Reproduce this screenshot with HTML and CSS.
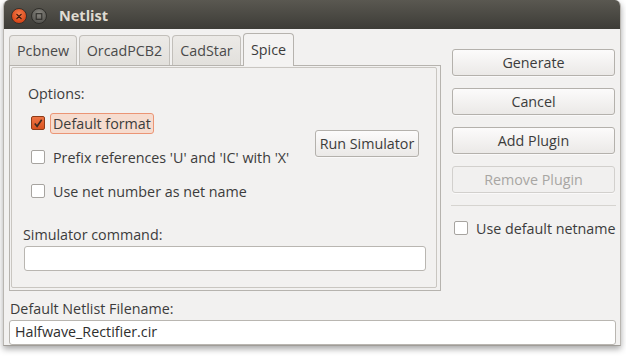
FILE: index.html
```html
<!DOCTYPE html>
<html>
<head>
<meta charset="utf-8">
<link rel="stylesheet" href="styles.css">
</head>
<body>
<div class="window">
  <div class="titlebar">
    <span class="wbtn close"><svg width="15" height="15" viewBox="0 0 15 15"><path d="M5.2 5.2 L9.8 9.8 M9.8 5.2 L5.2 9.8" stroke="#3a1a0e" stroke-width="1.4" stroke-linecap="round"/></svg></span>
    <span class="wbtn max"><svg width="15" height="15" viewBox="0 0 15 15"><rect x="4.5" y="4.5" width="6" height="6" fill="none" stroke="#2e2d2a" stroke-width="1.2"/></svg></span>
    <span class="title">Netlist</span>
  </div>
  <div class="body">
    <div class="main">
      <div class="left">
        <div class="tabs">
          <div class="tab t1">Pcbnew</div>
          <div class="tab t2">OrcadPCB2</div>
          <div class="tab t3">CadStar</div>
          <div class="tab active">Spice</div>
        </div>
        <div class="page">
          <div class="box">
            <div class="options-label">Options:</div>
            <div class="opts">
              <div class="checks">
                <label class="check first"><span class="cb checked"><svg width="13" height="13" viewBox="0 0 13 13"><path d="M3 6.5 L5.5 9.5 L10.5 2.5" fill="none" stroke="#3b2a22" stroke-width="1.8"/></svg></span><span class="focus">Default format</span></label>
                <label class="check"><span class="cb"></span><span class="lbl">Prefix references 'U' and 'IC' with 'X'</span></label>
                <label class="check"><span class="cb"></span><span class="lbl">Use net number as net name</span></label>
              </div>
              <div class="runcol"><button class="btn run">Run Simulator</button></div>
            </div>
            <div class="sim-label">Simulator command:</div>
            <div class="input sim"></div>
          </div>
        </div>
      </div>
      <div class="right">
        <button class="btn side">Generate</button>
        <button class="btn side">Cancel</button>
        <button class="btn side">Add Plugin</button>
        <button class="btn side disabled">Remove Plugin</button>
        <div class="sep"></div>
        <label class="check netname"><span class="cb"></span><span class="lbl">Use default netname</span></label>
      </div>
    </div>
    <div class="fn-label">Default Netlist Filename:</div>
    <div class="input fn">Halfwave_Rectifier.cir</div>
  </div>
</div>
</body>
</html>
```
FILE: styles.css
```css
* { box-sizing: border-box; }
html, body { margin: 0; padding: 0; }
body {
  width: 626px; height: 356px; overflow: hidden;
  background: #ffffff;
  font-family: "Open Sans", "DejaVu Sans", sans-serif;
  font-size: 14.3px;
  color: #3c3c3c;
}
.window {
  margin-left: 3px;
  width: 618px;
  height: 346px;
  background: #f2f1f0;
  border-radius: 6px 6px 0 0;
  border-left: 1px solid #b9b6b1;
  border-right: 1px solid #b9b6b1;
  border-bottom: 1px solid #a09d98;
  box-shadow: 0 3px 6px rgba(0,0,0,0.35);
  overflow: hidden;
}
.titlebar {
  height: 29px;
  background: linear-gradient(#5a5851, #3d3c37);
  display: flex;
  align-items: center;
  padding-left: 7px;
  gap: 4px;
}
.wbtn {
  width: 16px; height: 16px; border-radius: 50%;
  display: flex; align-items: center; justify-content: center;
  margin-top: 3px;
}
.close {
  background: radial-gradient(circle at 50% 35%, #f57c4b, #d9481a 70%);
  border: 1px solid #3a2f29;
}
.max {
  background: radial-gradient(circle at 50% 35%, #8a8882, #5b5a55 70%);
  border: 1px solid #2f2e2a;
}
.title {
  margin-left: 8px;
  color: #dfdbd2;
  font-weight: bold;
  font-size: 14.5px;
  margin-top: 2px;
}
.body { padding: 5px 5px 0 5px; }
.main { display: flex; gap: 11px; }
.left { width: 433px; }
.tabs { display: flex; align-items: flex-end; gap: 2px; height: 31px; }
.tab {
  height: 30px;
  border: 1px solid #c2bfba;
  border-bottom: none;
  border-radius: 4px 4px 0 0;
  background: linear-gradient(#eceae7, #e2e0dc);
  display: flex; align-items: center; justify-content: center;
  font-size: 14.3px;
  color: #4a4a4a;
  white-space: nowrap;
}
.t1 { width: 68px; }
.t2 { width: 91px; }
.t3 { width: 69px; }
.tab.active {
  width: 51px; height: 33px;
  background: #f4f3f2;
  border-color: #b6b3ae;
  color: #3c3c3c;
  position: relative; top: 1px;
  padding-bottom: 2px;
}
.page {
  height: 226px;
  border: 1px solid #b6b3ae;
  padding: 1px 3px 2px 1px;
}
.box {
  height: 100%;
  border: 1px solid #c9c6c1;
  border-radius: 2px;
  padding: 16px 10px 0 11px;
}
.options-label { margin-left: 5px; line-height: 20px; }
.opts { display: flex; margin-top: 9px; }
.checks { display: flex; flex-direction: column; gap: 14px; margin-left: 8px; width: 270px; flex: none; }
.check { display: flex; align-items: center; height: 20px; white-space: nowrap; }
.cb {
  width: 14px; height: 14px;
  border: 1px solid #a7a4a0;
  border-radius: 2px;
  background: #ffffff;
  flex: none;
  display: flex; align-items: center; justify-content: center;
}
.cb.checked {
  background: linear-gradient(#ee7444, #d9531f);
  border-color: #8e3b17;
}
.lbl { margin-left: 8px; }
.focus {
  margin-left: 5px;
  padding: 0 2px 0 2px;
  height: 21px;
  line-height: 19px;
  border: 1px solid #eb9575;
  border-radius: 3px;
  background: #f6dccf;
}
.runcol { margin-left: 14px; padding-top: 17px; }
.btn {
  font-family: inherit;
  font-size: 14.3px;
  color: #3c3c3c;
  border: 1px solid #b4b1ac;
  border-radius: 3px;
  background: linear-gradient(#fcfbfb, #ebe9e7);
  box-shadow: 0 1px 0 rgba(255,255,255,0.6);
  padding: 0;
  white-space: nowrap;
}
.run { width: 104px; height: 27px; }
.sim-label { margin-top: 24px; line-height: 20px; }
.input {
  height: 25px;
  background: #ffffff;
  border: 1px solid #b9b6b1;
  border-radius: 3px;
  padding-left: 5px;
  line-height: 22px;
}
.sim { width: 402px; margin-top: 1px; margin-left: 1px; }
.right {
  width: 163px;
  padding-top: 15px;
  display: flex; flex-direction: column;
}
.side { height: 27px; margin-bottom: 12px; width: 163px; }
.side.disabled { color: #a8a6a3; background: #f1f0ef; border-color: #d2d0cd; }
.sep { height: 1px; background: #d6d4d0; margin-top: 0px; margin-left: -1px; margin-right: -1px; }
.netname { margin-top: 12px; margin-left: 2px; }
.fn-label { margin-top: 8px; line-height: 20px; margin-left: 1px; }
.fn { width: 607px; margin-top: 1px; margin-left: 0px; color: #2e2e2e; }
```
